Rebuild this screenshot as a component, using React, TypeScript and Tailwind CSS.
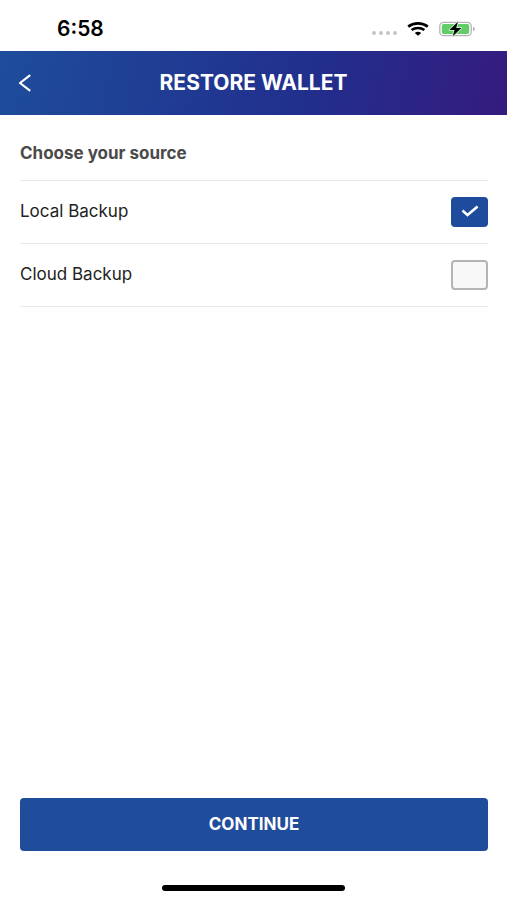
import { useState } from 'react'

const SOURCES = [
  { id: 'local', label: 'Local Backup' },
  { id: 'cloud', label: 'Cloud Backup' },
]

function WifiIcon() {
  return (
    <svg width="22" height="14" viewBox="0 0 22 14" fill="none" aria-hidden="true">
      <path d="M1.2 4.6C6.6.3 15.4.3 20.8 4.6" stroke="#000" strokeWidth="2.7" />
      <path d="M4.6 8.1C8.2 5.3 13.8 5.3 17.4 8.1" stroke="#000" strokeWidth="2.5" />
      <path d="M7.8 10.9c1.9-1.5 4.5-1.5 6.4 0L11 13.8z" fill="#000" />
    </svg>
  )
}

function BatteryIcon() {
  return (
    <svg width="37" height="16" viewBox="0 0 37 16" fill="none" aria-hidden="true">
      <rect x=".8" y="1.3" width="31.4" height="13.4" rx="3.8" stroke="#b4b4b4" strokeWidth="1.3" />
      <path d="M34 6c2.2.7 2.2 3.3 0 4z" fill="#a9a9a9" />
      <rect x="2.8" y="3.1" width="27.4" height="9.8" rx="2" fill="#62cd67" />
      <path
        d="M18.9.8 10.4 9h5.1l-1.7 6.2L22.4 7h-5.2z"
        fill="#000"
        stroke="#d9f3da"
        strokeWidth="1.6"
        paintOrder="stroke"
        strokeLinejoin="round"
      />
    </svg>
  )
}

function StatusBar() {
  return (
    <div className="flex h-[51px] items-center justify-between pt-1.5 pr-[31px] pl-[57px]">
      <span className="text-[21px] font-semibold text-black">6:58</span>
      <div className="flex items-center">
        <div className="mt-2 mr-[10px] flex gap-[3px]">
          {[0, 1, 2, 3].map((dot) => (
            <span key={dot} className="h-1 w-1 rounded-full bg-[#c6c6c6]" />
          ))}
        </div>
        <WifiIcon />
        <div className="ml-[10px]">
          <BatteryIcon />
        </div>
      </div>
    </div>
  )
}

function Header() {
  return (
    <header className="grid h-16 grid-cols-[50px_1fr_50px] items-center bg-linear-[105deg] from-[#1e4d9b] via-[#212f8d] via-60% to-[#351b7e] text-white">
      <button type="button" aria-label="Back" className="flex h-full items-center pl-[18px]">
        <svg width="14" height="18" viewBox="0 0 14 18" fill="none" aria-hidden="true">
          <path d="M12.2 1.2 2 9l10.2 7.8" stroke="#fff" strokeWidth="2.2" strokeLinejoin="round" />
        </svg>
      </button>
      <h1 className="text-center text-[21px] font-bold">RESTORE WALLET</h1>
    </header>
  )
}

type SourceRowProps = {
  id: string
  label: string
  checked: boolean
  onSelect: () => void
}

function SourceRow({ id, label, checked, onSelect }: SourceRowProps) {
  return (
    <div className="flex h-[63px] items-center justify-between border-b border-[#e9e9ec]">
      <label htmlFor={id} className="text-[17px] text-[#222]">
        {label}
      </label>
      <div className="grid">
        <input
          id={id}
          type="checkbox"
          checked={checked}
          onChange={onSelect}
          className="col-start-1 row-start-1 h-[30px] w-[37px] appearance-none rounded-sm border-2 border-[#b4b4b4] bg-[#f8f8f8] checked:border-[#1e4b9b] checked:bg-[#1e4b9b]"
        />
        {checked && (
          <svg
            width="18"
            height="14"
            viewBox="0 0 18 14"
            fill="none"
            className="pointer-events-none col-start-1 row-start-1 place-self-center"
            aria-hidden="true"
          >
            <path d="m1.5 5.5 5 4.6L16.6 1.5" stroke="#fff" strokeWidth="2.6" />
          </svg>
        )}
      </div>
    </div>
  )
}

export default function App() {
  const [source, setSource] = useState('local')

  return (
    <div className="flex min-h-screen flex-col bg-white font-['Inter','Liberation_Sans',sans-serif]">
      <StatusBar />
      <Header />
      <main className="flex flex-1 flex-col pr-[19px] pl-5">
        <h2 className="flex h-[66px] items-center border-b border-[#e9e9ec] pt-3 text-[17px] font-bold text-[#4a4a4a]">
          Choose your source
        </h2>
        {SOURCES.map((item) => (
          <SourceRow
            key={item.id}
            id={item.id}
            label={item.label}
            checked={source === item.id}
            onSelect={() => setSource(item.id)}
          />
        ))}
        <button
          type="button"
          className="mt-auto h-[53px] rounded-sm bg-[#1f4c9b] text-[17px] font-bold text-white"
        >
          CONTINUE
        </button>
      </main>
      <div className="flex justify-center pt-[34px] pb-[9px]">
        <div className="h-1.5 w-[36%] rounded-full bg-black" />
      </div>
    </div>
  )
}
